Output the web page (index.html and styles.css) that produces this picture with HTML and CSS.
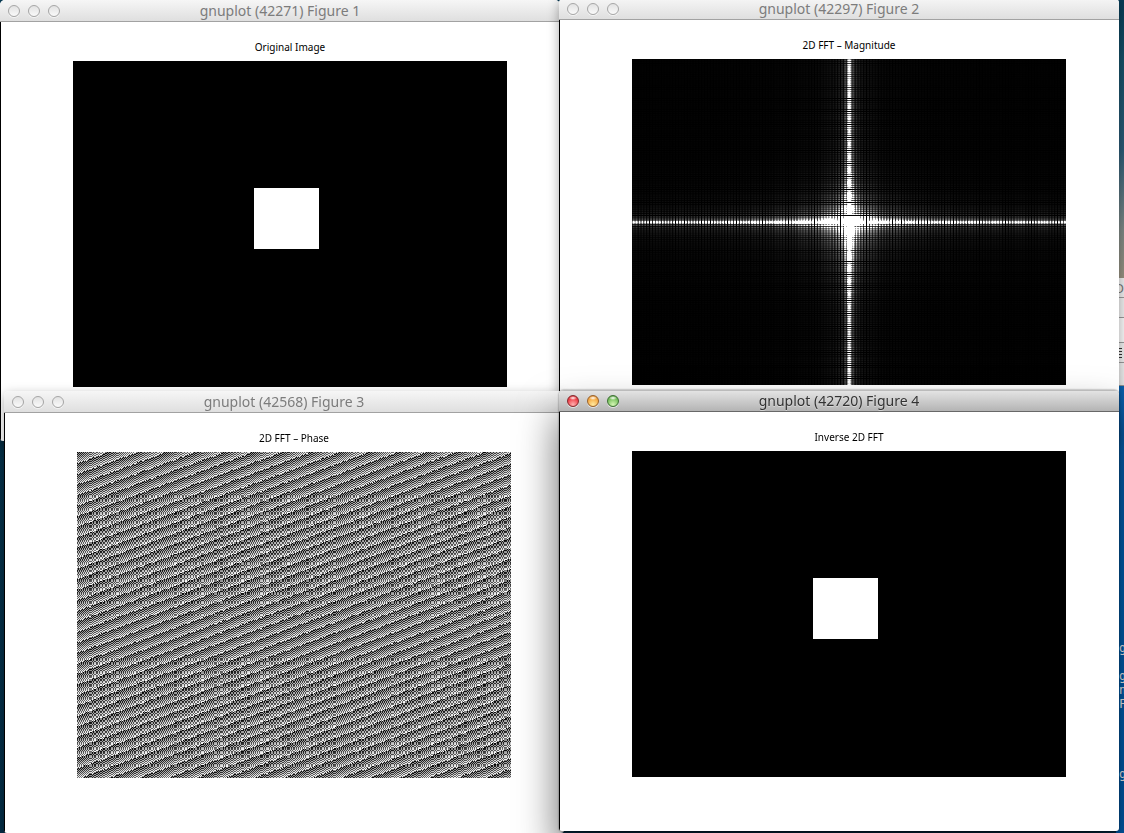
FILE: index.html
```html
<!DOCTYPE html>
<html lang="en">
<head>
<meta charset="utf-8">
<title>gnuplot figures</title>
<link rel="stylesheet" href="styles.css">
</head>
<body>
<main class="desktop">
  <aside class="terminal" aria-label="Terminal">
    <span class="line">g</span><span class="line"></span><span class="line">g</span><span class="line">n</span><span class="line">F</span><span class="line"></span><span class="line"></span><span class="line"></span><span class="line"></span><span class="line">g</span>
  </aside>
  <aside class="backwindow" aria-label="Background window">
    <div class="strip toolbar">D</div>
    <div class="strip"></div>
    <div class="strip tall"></div>
    <div class="strip ruler"><i></i><i></i><i></i><i></i></div>
    <div class="strip"></div>
  </aside>

  <section class="window figure1">
    <header class="titlebar">
      <div class="lights"><button aria-label="Close"></button><button aria-label="Minimize"></button><button aria-label="Zoom"></button></div>
      <h1>gnuplot (42271) Figure 1</h1>
    </header>
    <figure class="plot">
      <figcaption>Original Image</figcaption>
      <canvas width="434" height="326" data-plot="square"></canvas>
    </figure>
  </section>

  <section class="window figure2">
    <header class="titlebar">
      <div class="lights"><button aria-label="Close"></button><button aria-label="Minimize"></button><button aria-label="Zoom"></button></div>
      <h1>gnuplot (42297) Figure 2</h1>
    </header>
    <figure class="plot">
      <figcaption>2D FFT – Magnitude</figcaption>
      <canvas width="434" height="326" data-plot="magnitude"></canvas>
    </figure>
  </section>

  <section class="window figure3">
    <header class="titlebar">
      <div class="lights"><button aria-label="Close"></button><button aria-label="Minimize"></button><button aria-label="Zoom"></button></div>
      <h1>gnuplot (42568) Figure 3</h1>
    </header>
    <figure class="plot">
      <figcaption>2D FFT – Phase</figcaption>
      <canvas width="434" height="326" data-plot="phase"></canvas>
    </figure>
  </section>

  <section class="window figure4 active">
    <header class="titlebar">
      <div class="lights"><button class="close" aria-label="Close"></button><button class="minimize" aria-label="Minimize"></button><button class="zoom" aria-label="Zoom"></button></div>
      <h1>gnuplot (42720) Figure 4</h1>
    </header>
    <figure class="plot">
      <figcaption>Inverse 2D FFT</figcaption>
      <canvas width="434" height="326" data-plot="square"></canvas>
    </figure>
  </section>
</main>
<script src="plots.js"></script>
</body>
</html>
```
FILE: styles.css
```css
* { box-sizing: border-box; }

body {
  margin: 0;
  font-family: "Noto Sans", "DejaVu Sans", sans-serif;
}

.desktop {
  position: relative;
  height: 100vh;
  overflow: hidden;
  background: linear-gradient(#073b55 0, #164f66 60px, #2b5a75 150px, #7d8784 230px, #96907f 278px, #06324a 440px, #042e47 100%);
}

.terminal {
  position: absolute;
  top: 386px;
  right: 0;
  bottom: 0;
  width: 8px;
  padding: 255px 0 0 3px;
  display: flex;
  flex-direction: column;
  background: linear-gradient(#0a64b4, #0064b8 40%, #0060b4);
  color: #fff;
  font: 12px/14px "DejaVu Sans Mono", monospace;
}

.line { height: 14px; }

.backwindow {
  position: absolute;
  top: 278px;
  right: 0;
  width: 8px;
  padding-left: 3px;
  overflow: hidden;
  background: #ececec;
}

.strip {
  height: 20px;
  border-bottom: 1px solid #999;
  background: #eee;
}

.strip.tall { height: 25px; background: #f8f8f8; }
.strip:last-child { height: 23px; }

.toolbar {
  display: flex;
  justify-content: flex-end;
  color: #777;
  font-size: 13px;
  line-height: 20px;
}

.ruler {
  display: flex;
  flex-direction: column;
  justify-content: center;
  gap: 2px;
}

.ruler i { width: 3px; height: 1px; background: #333; }

.window {
  position: absolute;
  width: 560px;
  height: 441px;
  border-radius: 5px 5px 3px 3px;
  background: #fff;
  overflow: hidden;
  box-shadow: 0 4px 12px rgba(0, 0, 0, .35);
}

.active { box-shadow: 0 24px 40px rgba(0, 0, 0, .6), 0 0 2px rgba(0, 0, 0, .6); }

.figure1 { left: 0; top: 0; }
.figure2 { left: 559px; top: -2px; }
.figure3 { left: 4px; top: 391px; height: 442px; }
.figure4 { left: 559px; top: 390px; }

.titlebar {
  display: grid;
  grid-template-columns: 1fr auto 1fr;
  align-items: center;
  height: 22px;
  padding: 0 8px;
  border-bottom: 1px solid #a2a2a2;
  background: linear-gradient(#f6f6f6, #dfdfdf);
}

.titlebar h1 {
  margin: 0;
  color: #7c7c7c;
  font-size: 14px;
  font-weight: 400;
  line-height: 20px;
}

.active .titlebar {
  border-bottom-color: #686868;
  border-top: 1px solid #bbb;
  background: linear-gradient(#e3e3e3, #b4b4b4);
}

.active h1 { color: #333; text-shadow: 0 1px 0 rgba(255, 255, 255, .4); }

.lights { display: flex; gap: 8px; }

.lights button {
  width: 12px;
  height: 12px;
  padding: 0;
  border: 1px solid #a5a5a5;
  border-radius: 50%;
  background: linear-gradient(#e2e2e2, #fafafa);
  box-shadow: 0 1px 0 rgba(255, 255, 255, .6);
}

.lights .close { border-color: #84282c; background: radial-gradient(ellipse 4px 2px at 50% 20%, #fff, transparent), radial-gradient(circle at 50% 85%, #ffb0b0, #ee3c44 65%, #c02a30); }
.lights .minimize { border-color: #99612a; background: radial-gradient(ellipse 4px 2px at 50% 20%, #fff, transparent), radial-gradient(circle at 50% 85%, #ffeaa0, #f6a840 65%, #c57a2c); }
.lights .zoom { border-color: #3d7034; background: radial-gradient(ellipse 4px 2px at 50% 20%, #fff, transparent), radial-gradient(circle at 50% 85%, #d5f6b5, #76bf5c 65%, #4b8c3c); }

.plot {
  display: flex;
  flex-direction: column;
  align-items: center;
  gap: 6px;
  height: 100%;
  margin: 0;
  padding: 17px 53px 0 72px;
  border-left: 1px solid #000;
}

.plot figcaption {
  color: #000;
  font-size: 10px;
  line-height: 16px;
}

.plot canvas { display: block; }
```
FILE: plots.js
```js
// Sample grids: a white square on black, and its closed-form 2D spectrum.
const image = { cols: 1000, rows: 800, x: 417, y: 311, w: 150, h: 150, offset: 0.5 };
const phaseGrid = { cols: 500, rows: 400, x: 205, y: 147, w: 76, h: 76, offset: 0 };

function kernel(k, start, width, size) {
  const a = Math.PI * k / size;
  const amp = k === 0 ? width : Math.sin(a * width) / Math.sin(a);
  return { amp, phase: -a * (2 * start + width - 1) };
}

function spectrum(grid, c, r) {
  return {
    u: kernel(c - grid.cols / 2, grid.x, grid.w, grid.cols),
    v: kernel(r - grid.rows / 2, grid.y, grid.h, grid.rows)
  };
}

const plots = {
  square: {
    grid: image,
    shade(g, c, r) {
      return c >= g.x && c < g.x + g.w && r >= g.y && r < g.y + g.h ? 255 : 0;
    }
  },
  magnitude: {
    grid: image,
    shade(g, c, r) {
      const { u, v } = spectrum(g, c, r);
      return Math.min(255, Math.abs(u.amp * v.amp) * 255 / 105);
    }
  },
  phase: {
    grid: phaseGrid,
    shade(g, c, r) {
      const { u, v } = spectrum(g, c, r);
      const flip = u.amp * v.amp < 0 ? Math.PI : 0;
      const turns = (u.phase + v.phase + flip) / (2 * Math.PI) + 0.5;
      return (turns - Math.floor(turns)) * 255;
    }
  }
};

document.querySelectorAll("canvas").forEach((canvas) => {
  const ctx = canvas.getContext("2d");
  const { grid, shade } = plots[canvas.dataset.plot];
  const out = ctx.createImageData(canvas.width, canvas.height);
  for (let y = 0; y < canvas.height; y++) {
    for (let x = 0; x < canvas.width; x++) {
      const c = Math.floor((x + grid.offset) * grid.cols / canvas.width);
      const r = Math.floor((y + grid.offset) * grid.rows / canvas.height);
      const i = (y * canvas.width + x) * 4;
      out.data[i] = out.data[i + 1] = out.data[i + 2] = shade(grid, c, r);
      out.data[i + 3] = 255;
    }
  }
  ctx.putImageData(out, 0, 0);
});
```
